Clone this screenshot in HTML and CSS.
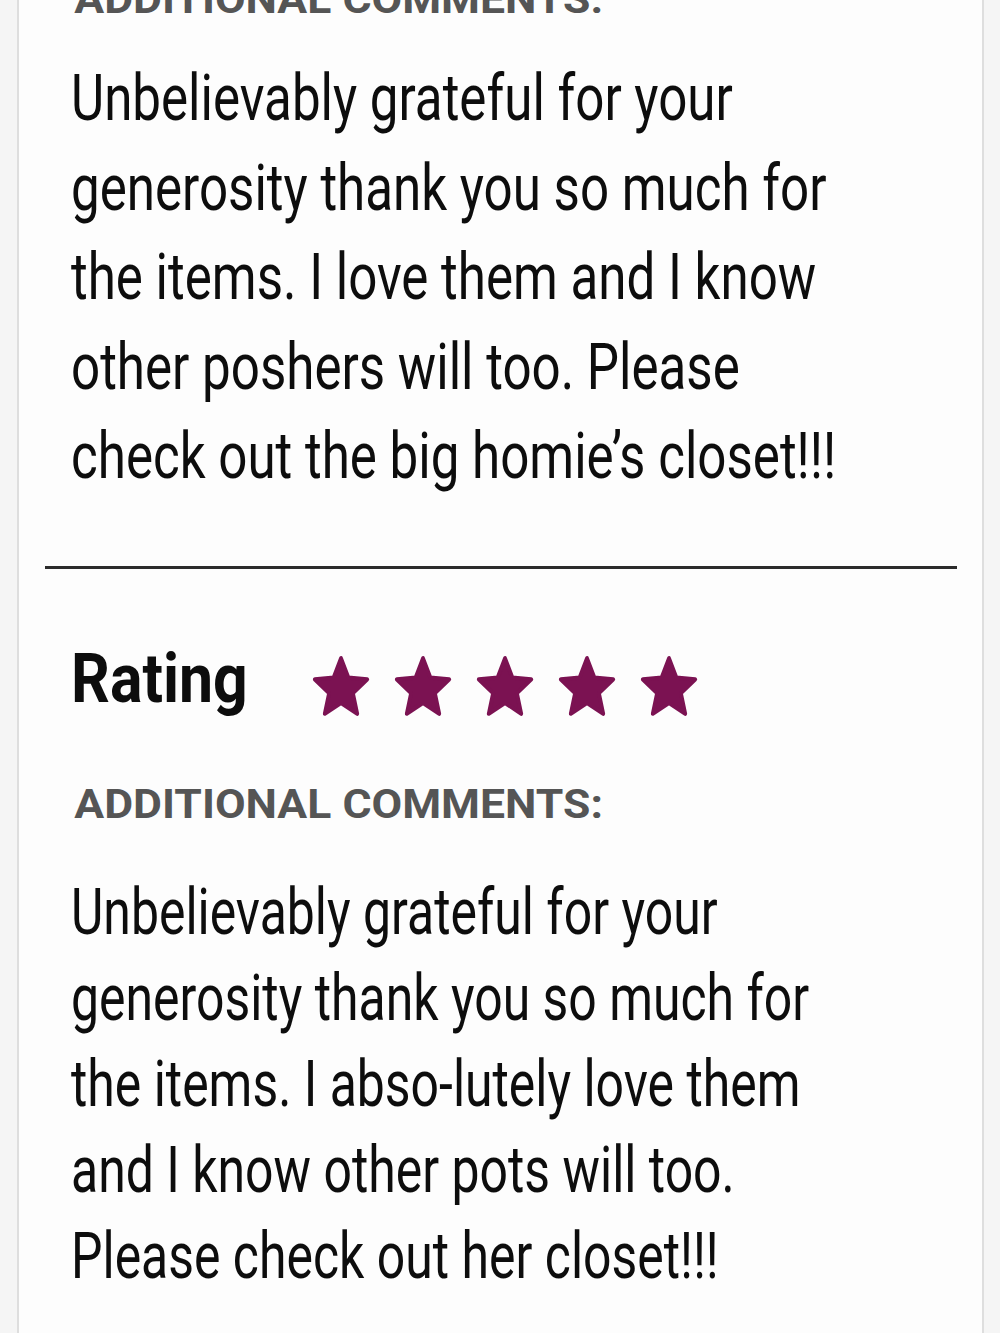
FILE: index.html
```html
<!DOCTYPE html>
<html lang="en">
<head>
<meta charset="utf-8">
<title>Reviews</title>
<link rel="stylesheet" href="styles.css">
</head>
<body>
<main class="card">
  <section class="review">
    <h3 class="label label-top">ADDITIONAL COMMENTS:</h3>
    <p class="comment comment-loose">Unbelievably grateful for your<br>generosity thank you so much for<br>the items. I love them and I know<br>other poshers will too. Please<br>check out the big homie’s closet!!!</p>
  </section>

  <hr class="divider">

  <section class="review">
    <div class="rating-row">
      <h2 class="rating-title">Rating</h2>
      <div class="stars" aria-label="5 out of 5 stars">
        <svg class="star" viewBox="1.3 1.2 21.4 20.6" preserveAspectRatio="none"><path d="M12 17.27L18.18 21l-1.64-7.03L22 9.24l-7.19-.61L12 2 9.19 8.63 2 9.24l5.46 4.73L5.820 21z"/></svg>
        <svg class="star" viewBox="1.3 1.2 21.4 20.6" preserveAspectRatio="none"><path d="M12 17.27L18.18 21l-1.64-7.03L22 9.24l-7.19-.61L12 2 9.19 8.63 2 9.24l5.46 4.73L5.82 21z"/></svg>
        <svg class="star" viewBox="1.3 1.2 21.4 20.6" preserveAspectRatio="none"><path d="M12 17.27L18.18 21l-1.64-7.03L22 9.24l-7.19-.61L12 2 9.19 8.63 2 9.24l5.46 4.73L5.82 21z"/></svg>
        <svg class="star" viewBox="1.3 1.2 21.4 20.6" preserveAspectRatio="none"><path d="M12 17.27L18.18 21l-1.64-7.03L22 9.24l-7.19-.61L12 2 9.19 8.63 2 9.24l5.46 4.73L5.82 21z"/></svg>
        <svg class="star" viewBox="1.3 1.2 21.4 20.6" preserveAspectRatio="none"><path d="M12 17.27L18.18 21l-1.64-7.03L22 9.24l-7.19-.61L12 2 9.19 8.63 2 9.24l5.46 4.73L5.82 21z"/></svg>
      </div>
    </div>
    <h3 class="label label-second">ADDITIONAL COMMENTS:</h3>
    <p class="comment comment-tight">Unbelievably grateful for your<br>generosity thank you so much for<br>the items. I abso-lutely love them<br>and I know other pots will too.<br>Please check out her closet!!!</p>
  </section>
</main>
</body>
</html>
```

FILE: styles.css
```css
html, body {
  margin: 0;
  padding: 0;
}

body {
  background: #f5f5f5;
  font-family: Roboto, "Liberation Sans", Arial, sans-serif;
  color: #0d0d0d;
  overflow: hidden;
}

.card {
  display: flow-root;
  margin: 0 16px 0 17px;
  min-height: 1333px;
  background: #fdfdfd;
  border-left: 2px solid #dedede;
  border-right: 2px solid #dedede;
  padding: 0 0 0 52px;
  box-sizing: border-box;
  overflow: hidden;
}

/* section labels */
.label {
  width: max-content;
  margin: 0;
  font-size: 41px;
  line-height: 48px;
  font-weight: 700;
  color: #555555;
  white-space: nowrap;
  transform: scaleX(1.085);
  transform-origin: 0 0;
  padding-left: 3px;
}

.label-top {
  margin-top: -25px;
}

.label-second {
  margin-top: 61px;
}

/* comment body text, slightly condensed */
.comment {
  width: max-content;
  margin: 0;
  font-size: 65px;
  font-weight: 400;
  white-space: nowrap;
  transform-origin: 0 0;
}

.comment-loose {
  margin-top: 31px;
  line-height: 89.5px;
  transform: scaleX(0.786);
}

.comment-tight {
  margin-top: 41px;
  line-height: 86px;
  transform: scaleX(0.768);
}

.divider {
  margin: 64px 25px 0 -26px;
  border: 0;
  height: 3px;
  background: #2b2b2b;
}

.rating-row {
  display: flex;
  align-items: center;
  margin-top: 70px;
  height: 80px;
}

.rating-title {
  margin: 0;
  font-size: 69px;
  line-height: 80px;
  font-weight: 700;
  color: #0d0d0d;
  transform: scaleX(0.88);
  transform-origin: 0 0;
  width: 242px;
}

.stars {
  display: flex;
  gap: 26px;
  margin-top: 14px;
}

.star {
  width: 56px;
  height: 60px;
  fill: #7b1252;
  stroke: #7b1252;
  stroke-width: 1.5;
  stroke-linejoin: round;
  overflow: visible;
}
```
